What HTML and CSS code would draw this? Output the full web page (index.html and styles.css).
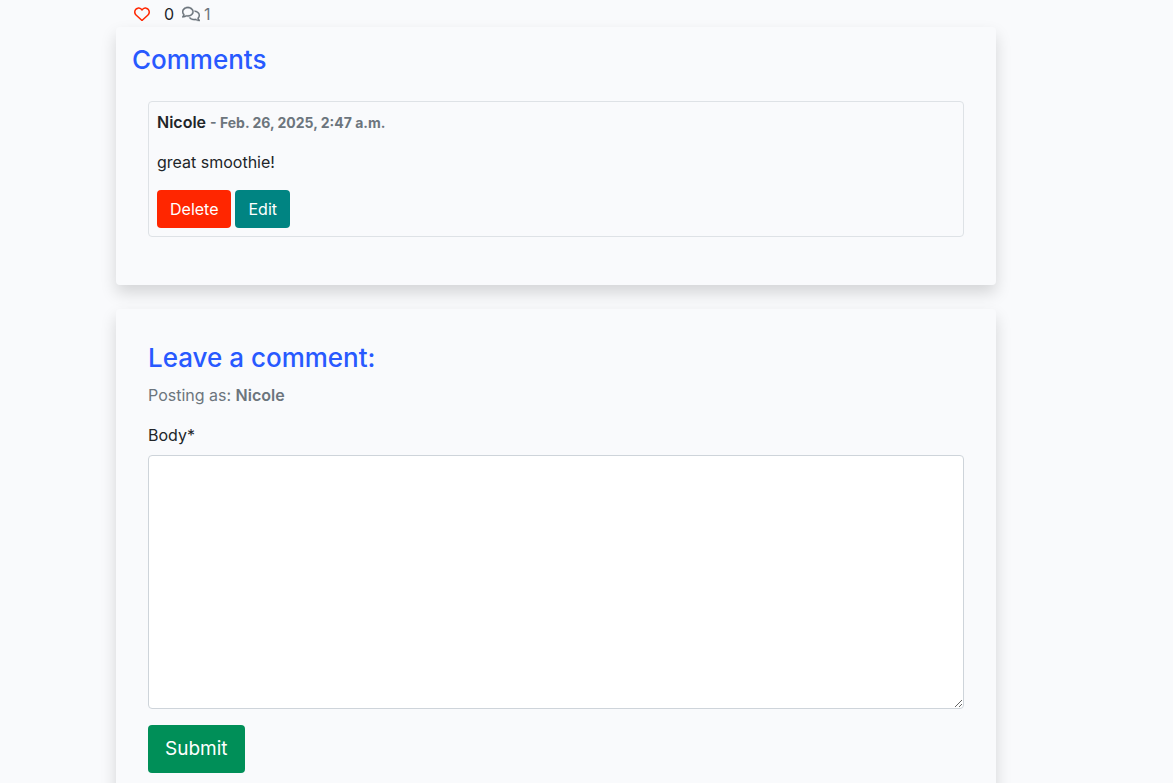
FILE: index.html
```html
<!DOCTYPE html>
<html lang="en">
<head>
<meta charset="utf-8">
<meta name="viewport" content="width=device-width, initial-scale=1">
<title>Comments</title>
<link rel="stylesheet" href="styles.css">
</head>
<body>
<main class="container">
  <div class="stats">
    <button class="like" type="button" aria-label="Like">
      <svg class="icon-heart" viewBox="0 0 512 512" aria-hidden="true"><path fill="currentColor" d="M225.800 468.200l-2.500-2.300L48.100 303.200C17.400 274.700 0 234.700 0 192.800v-3.300c0-70.400 50-130.800 119.200-144C158.600 37.900 198.900 47 231 69.600c9 6.400 17.400 13.800 25 22.300c4.200-4.800 8.700-9.200 13.500-13.300c3.700-3.200 7.500-6.200 11.500-9c32.100-22.600 72.400-31.700 111.800-24.200C462 58.600 512 119.100 512 189.500v3.300c0 41.900-17.400 81.900-48.100 110.400L288.700 465.900l-2.500 2.300c-8.200 7.600-19 11.900-30.200 11.900s-22-4.200-30.200-11.900zM239.100 145c-.4-.3-.7-.7-1-1.100l-17.800-20c-23.100-25.900-58-37.700-92-31.200C81.600 101.500 48 142.100 48 189.500v3.300c0 28.500 11.900 55.800 32.800 75.200L256 430.700 431.200 268c20.900-19.400 32.800-46.700 32.800-75.200v-3.300c0-47.300-33.600-88-80.100-96.900c-34-6.500-69 5.400-92 31.200l-17.800 20c-.3 .4-.7 .7-1 1.100c-4.500 4.500-10.600 7-16.900 7s-12.400-2.500-16.900-7z"/></svg>
    </button>
    <span class="likes">0</span>
    <span class="replies">
      <svg class="icon-chat" viewBox="0 0 640 512" aria-hidden="true"><path fill="currentColor" stroke="currentColor" stroke-width="8" d="M88.200 309.100c9.800-18.300 6.800-40.800-7.500-55.800C59.400 230.900 48 204 48 176c0-63.500 63.800-128 160-128s160 64.500 160 128s-63.800 128-160 128c-13.100 0-25.800-1.300-37.800-3.600c-10.400-2-21.200-.6-30.700 4.200c-4.100 2.100-8.300 4.100-12.600 6c-16 7.200-32.900 13.500-49.900 18c2.800-4.600 5.400-9.100 7.900-13.600c1.100-1.900 2.200-3.900 3.200-5.900zM0 176c0 41.800 17.200 80.100 45.900 110.300c-.9 1.700-1.900 3.500-2.800 5.100c-10.300 18.400-22.300 36.500-36.600 52.100c-6.600 7-8.300 17.200-4.600 25.900C5.800 378.300 14.400 384 24 384c43 0 86.500-13.300 122.700-29.700c4.800-2.200 9.600-4.500 14.200-6.800c15.100 3 30.900 4.500 47.100 4.500c114.900 0 208-78.800 208-176S322.900 0 208 0S0 78.800 0 176zM432 480c16.200 0 31.900-1.600 47.100-4.500c4.600 2.300 9.400 4.600 14.200 6.800C529.500 498.700 573 512 616 512c9.600 0 18.200-5.700 22-14.500c3.800-8.800 2-19-4.600-25.900c-14.200-15.600-26.200-33.700-36.600-52.100c-.9-1.700-1.900-3.400-2.800-5.100C622.800 384.100 640 345.800 640 304c0-94.400-87.900-171.500-198.200-175.800c4.100 15.200 6.200 31.200 6.200 47.800l0 .6c87.200 6.700 144 67.500 144 127.400c0 28-11.400 54.900-32.700 77.200c-14.300 15-17.300 37.600-7.500 55.800c1.100 2 2.200 4 3.200 5.900c2.500 4.500 5.200 9 7.900 13.600c-17-4.500-33.900-10.700-49.900-18c-4.300-1.900-8.500-3.900-12.600-6c-9.500-4.800-20.300-6.200-30.700-4.200c-12.100 2.400-24.700 3.600-37.800 3.600c-61.700 0-110-26.500-136.800-62.300c-16 5.400-32.800 9.400-50 11.800C279 439.800 350 480 432 480z"/></svg>
      1
    </span>
  </div>

  <section class="card comments">
    <h2 class="title">Comments</h2>
    <article class="comment">
      <p class="byline">Nicole <span class="date">- Feb. 26, 2025, 2:47 a.m.</span></p>
      <p class="text">great smoothie!</p>
      <div class="actions">
        <button class="btn btn-delete" type="button">Delete</button>
        <button class="btn btn-edit" type="button">Edit</button>
      </div>
    </article>
  </section>

  <section class="card compose">
    <h2 class="title">Leave a comment:</h2>
    <p class="posting">Posting as: <strong class="user">Nicole</strong></p>
    <form>
      <label class="label" for="body">Body*</label>
      <textarea class="field" id="body" name="body" rows="10" required></textarea>
      <button class="btn btn-submit" type="submit">Submit</button>
    </form>
  </section>
</main>
</body>
</html>
```
FILE: styles.css
```css
* {
  box-sizing: border-box;
}

body {
  margin: 0;
  background: #f9fafc;
  color: #212529;
  font: 16px/24px Inter, "Liberation Sans", sans-serif;
  overflow-x: hidden;
}

h2,
p {
  margin: 0;
}

.container {
  width: 75%;
  margin-left: 116px;
  padding-top: 2px;
}

.stats {
  display: flex;
  align-items: center;
  margin-bottom: 1px;
  padding-left: 18px;
}

.like {
  display: flex;
  margin-right: 14px;
  padding: 0;
  border: 0;
  background: none;
  color: #ff2600;
}

.icon-heart {
  width: 16px;
  height: 16px;
}

.likes {
  margin-right: 8px;
}

.replies {
  display: flex;
  align-items: center;
  gap: 4px;
  color: #6c757d;
}

.icon-chat {
  width: 18px;
  height: 16px;
}

.card {
  margin-bottom: 24px;
  border-radius: 4px;
  box-shadow: 0 8px 16px rgba(0, 0, 0, 0.15);
}

.comments {
  padding: 16px 16px 48px;
}

.title {
  color: #2859ff;
  font-size: 26px;
  font-weight: 500;
  line-height: 34px;
}

.comment {
  margin: 24px 16px 0;
  padding: 8px;
  border: 1px solid #dee2e6;
  border-radius: 4px;
}

.byline {
  margin-bottom: 16px;
  font-weight: 600;
}

.date {
  color: #6c757d;
  font-size: 14px;
  font-weight: 700;
  line-height: 16px;
}

.text {
  margin-bottom: 16px;
}

.actions {
  display: flex;
  gap: 4px;
}

.btn {
  padding: 6px 12px;
  border: 1px solid transparent;
  border-radius: 4px;
  color: #fff;
  font: inherit;
}

.btn-delete {
  background: #ff2600;
}

.btn-edit {
  background: #008482;
}

.compose {
  padding: 32px;
}

.posting {
  margin: 8px 0 16px;
  color: #6c757d;
}

.user {
  font-weight: 600;
}

.label {
  display: block;
  margin-bottom: 8px;
}

.field {
  display: block;
  width: 100%;
  height: 254px;
  margin-bottom: 16px;
  padding: 6px 12px;
  border: 1px solid #ced4da;
  border-radius: 4px;
  background: #fff;
  font: inherit;
  resize: vertical;
}

.btn-submit {
  padding: 8px 16px;
  background: #008f58;
  font-size: 19px;
  line-height: 30px;
}
```
